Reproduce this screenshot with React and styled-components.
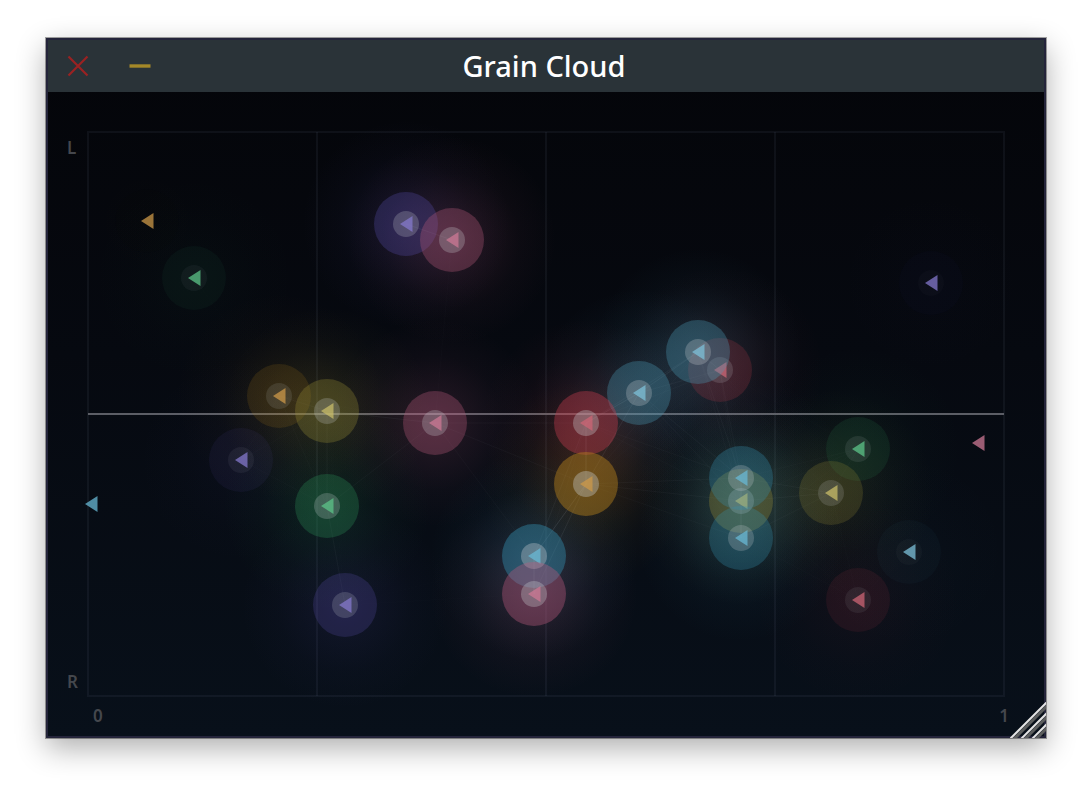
import React from "react";
import styled, { createGlobalStyle } from "styled-components";

const GlobalStyle = createGlobalStyle`
  * {
    box-sizing: border-box;
  }
  body {
    margin: 0;
    background: #ffffff;
    font-family: "Noto Sans", "Open Sans", sans-serif;
  }
`;

const Desktop = styled.main`
  padding: 38px 46px 54px;
`;

const Window = styled.section`
  position: relative;
  border: 2px solid #24243a;
  background: linear-gradient(#040509, #060910 45%, #08101a);
  box-shadow: 0 0 0 1px rgba(0, 0, 0, 0.35), 0 10px 28px rgba(0, 0, 0, 0.32);
`;

const TitleBar = styled.header`
  display: grid;
  grid-template-columns: 122px 1fr 126px;
  align-items: center;
  height: 52px;
  background: #2a3338;
`;

const WindowButtons = styled.div`
  display: flex;
  gap: 34px;
  padding-left: 16px;
`;

const IconButton = styled.button`
  display: flex;
  padding: 0;
  border: none;
  background: none;
  color: ${({ $color }) => $color};
  cursor: pointer;
`;

const Title = styled.h1`
  margin: 0;
  color: #ffffff;
  font-size: 29px;
  font-weight: 500;
  line-height: 40px;
  text-align: center;
`;

const Body = styled.div`
  display: grid;
  grid-template-columns: 40px 1fr 40px;
  grid-template-rows: 40px auto 40px;
`;

const PanAxis = styled.div`
  grid-area: 2 / 1;
  display: flex;
  flex-direction: column;
  justify-content: space-between;
  padding: 4px 10px 2px 19px;
`;

const PositionAxis = styled.div`
  grid-area: 3 / 2 / 4 / 4;
  display: flex;
  justify-content: space-between;
  padding: 8px 35px 8px 5px;
`;

const AxisLabel = styled.span`
  color: #44474d;
  font-size: 17px;
  font-weight: 600;
  line-height: 24px;
`;

const Plot = styled.svg`
  grid-area: 2 / 2;
  display: block;
  width: 100%;
  height: auto;
  overflow: visible;
`;

const ResizeHandle = styled.button`
  position: absolute;
  right: -2px;
  bottom: -2px;
  display: flex;
  padding: 0;
  border: none;
  background: none;
  cursor: nwse-resize;
`;

const WIDTH = 916;
const HEIGHT = 564;
const LINK_DISTANCE = 200;

const hues = {
  purple: { base: "#5a50b0", mark: "#8478cc" },
  pink: { base: "#b85a7c", mark: "#cc7894" },
  red: { base: "#c03c4c", mark: "#cc6474" },
  orange: { base: "#b4801c", mark: "#cc9848" },
  yellow: { base: "#a09438", mark: "#c8bc68" },
  green: { base: "#2c9458", mark: "#5cc488" },
  blue: { base: "#3490b0", mark: "#68b8d4" },
  steel: { base: "#4c98b4", mark: "#7cc0d8" },
};

const grains = [
  { x: 59, y: 89, hue: "orange", level: 0.02 },
  { x: 106, y: 146, hue: "green", level: 0.18 },
  { x: 843, y: 151, hue: "purple", level: 0.08 },
  { x: 821, y: 420, hue: "steel", level: 0.12 },
  { x: 890, y: 311, hue: "pink", level: 0 },
  { x: 3, y: 372, hue: "blue", level: 0 },
  { x: 153, y: 328, hue: "purple", level: 0.25 },
  { x: 770, y: 468, hue: "red", level: 0.3 },
  { x: 770, y: 317, hue: "green", level: 0.38 },
  { x: 191, y: 264, hue: "orange", level: 0.45 },
  { x: 743, y: 361, hue: "yellow", level: 0.6 },
  { x: 257, y: 473, hue: "purple", level: 0.7 },
  { x: 318, y: 92, hue: "purple", level: 0.85 },
  { x: 364, y: 108, hue: "pink", level: 0.98 },
  { x: 239, y: 279, hue: "yellow", level: 0.85 },
  { x: 239, y: 374, hue: "green", level: 0.85 },
  { x: 347, y: 291, hue: "pink", level: 0.98 },
  { x: 632, y: 238, hue: "red", level: 0.6 },
  { x: 610, y: 220, hue: "steel", level: 0.98 },
  { x: 551, y: 261, hue: "steel", level: 0.98 },
  { x: 498, y: 291, hue: "red", level: 1.2 },
  { x: 498, y: 352, hue: "orange", level: 1.35 },
  { x: 446, y: 424, hue: "blue", level: 1.25 },
  { x: 446, y: 462, hue: "pink", level: 1.15 },
  { x: 653, y: 369, hue: "yellow", level: 0.9 },
  { x: 653, y: 346, hue: "blue", level: 0.9 },
  { x: 653, y: 406, hue: "blue", level: 0.85 },
];

// neighbouring grains are joined, fainter the further apart they are
const links = grains.flatMap((a, i) =>
  grains
    .slice(i + 1)
    .map((b) => ({ a, b, distance: Math.hypot(a.x - b.x, a.y - b.y) }))
    .filter(({ distance }) => distance < LINK_DISTANCE)
);

const Grain = ({ grain }) => {
  const { base, mark } = hues[grain.hue];

  return (
    <g transform={`translate(${grain.x} ${grain.y})`}>
      <circle r='32' fill={base} opacity={grain.level * 0.34} />
      <circle r='13' fill='#c8ccd0' opacity={grain.level * 0.28} />
      <path d='M-6 0 L6.5 -8 V8 Z' fill={mark} opacity='0.75' />
    </g>
  );
};

const GrainPlot = () => (
  <Plot
    viewBox={`0 0 ${WIDTH} ${HEIGHT}`}
    role='img'
    aria-label='Grains by position and pan'
  >
    <defs>
      {Object.entries(hues).map(([name, { base }]) => (
        <radialGradient id={`glow-${name}`} key={name}>
          <stop offset='0' stopColor={base} stopOpacity='0.2' />
          <stop offset='0.35' stopColor={base} stopOpacity='0.11' />
          <stop offset='0.65' stopColor={base} stopOpacity='0.04' />
          <stop offset='1' stopColor={base} stopOpacity='0' />
        </radialGradient>
      ))}
    </defs>
    <g fill='none' stroke='#8c94b4' strokeOpacity='0.08' strokeWidth='2'>
      <rect width={WIDTH} height={HEIGHT} />
      {[1, 2, 3].map((n) => (
        <path d={`M${(WIDTH / 4) * n} 0 V${HEIGHT}`} key={n} />
      ))}
    </g>
    <path
      d={`M0 ${HEIGHT / 2} H${WIDTH}`}
      stroke='#5c5e66'
      strokeWidth='2'
    />
    {grains.map((grain) => (
      <circle
        key={`${grain.x}-${grain.y}`}
        cx={grain.x}
        cy={grain.y}
        r='104'
        fill={`url(#glow-${grain.hue})`}
        opacity={Math.min(grain.level, 1)}
      />
    ))}
    {links.map(({ a, b, distance }) => (
      <line
        key={`${a.x}-${a.y}-${b.x}-${b.y}`}
        x1={a.x}
        y1={a.y}
        x2={b.x}
        y2={b.y}
        stroke='#b4bcc4'
        opacity={0.14 * (1 - distance / LINK_DISTANCE) * a.level * b.level}
      />
    ))}
    {grains.map((grain) => (
      <Grain grain={grain} key={`${grain.x}-${grain.y}`} />
    ))}
  </Plot>
);

const App = () => (
  <>
    <GlobalStyle />
    <Desktop>
      <Window>
        <TitleBar>
          <WindowButtons>
            <IconButton type='button' aria-label='Close' $color='#9a2222'>
              <svg width='28' height='28' viewBox='0 0 28 28'>
                <path
                  d='M4.5 4.5 L23.5 23.5 M23.5 4.5 L4.5 23.5'
                  stroke='currentColor'
                  strokeWidth='2.2'
                />
              </svg>
            </IconButton>
            <IconButton type='button' aria-label='Minimise' $color='#a48828'>
              <svg width='28' height='28' viewBox='0 0 28 28'>
                <path
                  d='M3.5 14 H24.5'
                  stroke='currentColor'
                  strokeWidth='3.4'
                />
              </svg>
            </IconButton>
          </WindowButtons>
          <Title>Grain Cloud</Title>
        </TitleBar>
        <Body>
          <PanAxis>
            <AxisLabel>L</AxisLabel>
            <AxisLabel>R</AxisLabel>
          </PanAxis>
          <GrainPlot />
          <PositionAxis>
            <AxisLabel>0</AxisLabel>
            <AxisLabel>1</AxisLabel>
          </PositionAxis>
        </Body>
        <ResizeHandle type='button' aria-label='Resize'>
          <svg width='36' height='36' viewBox='0 0 36 36'>
            <path
              d='M4 37 L37 4 M15 37 L37 15 M26 37 L37 26'
              stroke='#5c5e5e'
              strokeWidth='3'
            />
            <path
              d='M0 37 L37 0 M11 37 L37 11 M22 37 L37 22'
              stroke='#e4e4e4'
              strokeWidth='2'
            />
          </svg>
        </ResizeHandle>
      </Window>
    </Desktop>
  </>
);

export default App;
